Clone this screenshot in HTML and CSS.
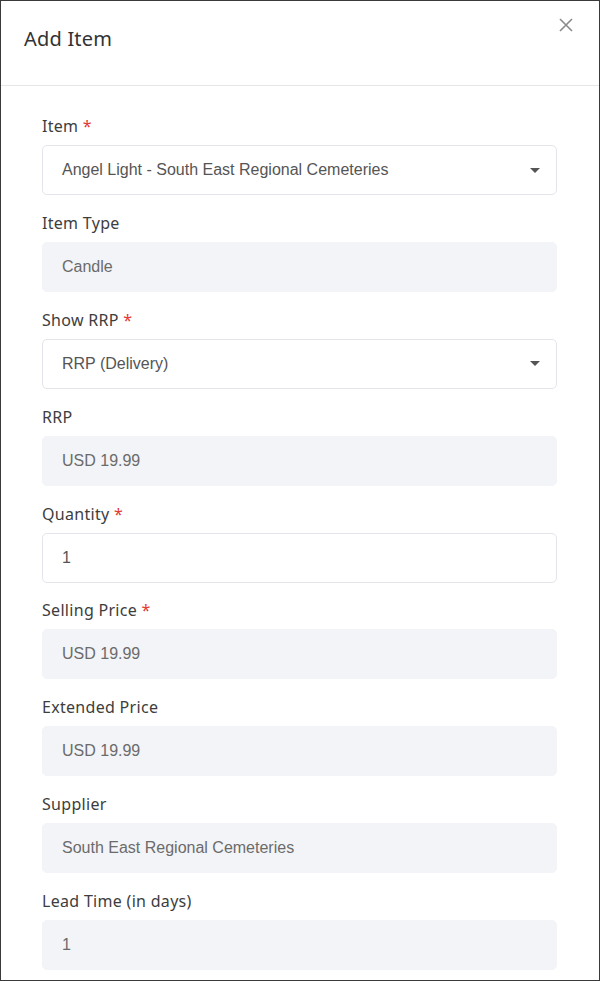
FILE: index.html
```html
<!DOCTYPE html>
<html>
<head>
<meta charset="utf-8">
<link rel="stylesheet" href="styles.css">
</head>
<body>
<div class="modal">
  <div class="header">
    <div class="title">Add Item</div>
    <button class="close" aria-label="Close">
      <svg width="14" height="14" viewBox="0 0 14 14"><path d="M1 1L13 13M13 1L1 13" stroke="#8a8a8a" stroke-width="1.6" fill="none"/></svg>
    </button>
  </div>
  <div class="body">
    <div class="field">
      <div class="label">Item <span class="req">*</span></div>
      <div class="input select"><span>Angel Light - South East Regional Cemeteries</span><span class="caret"></span></div>
    </div>
    <div class="field">
      <div class="label">Item Type</div>
      <div class="input ro">Candle</div>
    </div>
    <div class="field">
      <div class="label">Show RRP <span class="req">*</span></div>
      <div class="input select"><span>RRP (Delivery)</span><span class="caret"></span></div>
    </div>
    <div class="field">
      <div class="label">RRP</div>
      <div class="input ro">USD 19.99</div>
    </div>
    <div class="field">
      <div class="label">Quantity <span class="req">*</span></div>
      <div class="input">1</div>
    </div>
    <div class="field">
      <div class="label">Selling Price <span class="req">*</span></div>
      <div class="input ro">USD 19.99</div>
    </div>
    <div class="field">
      <div class="label">Extended Price</div>
      <div class="input ro">USD 19.99</div>
    </div>
    <div class="field">
      <div class="label">Supplier</div>
      <div class="input ro">South East Regional Cemeteries</div>
    </div>
    <div class="field">
      <div class="label">Lead Time (in days)</div>
      <div class="input ro">1</div>
    </div>
  </div>
</div>
</body>
</html>
```
FILE: styles.css
```css
html, body {
  margin: 0;
  padding: 0;
  background: #fff;
}
.modal {
  width: 600px;
  height: 981px;
  box-sizing: border-box;
  border: 1px solid #3a3a3a;
  overflow: hidden;
  background: #fff;
}
.header {
  height: 84px;
  border-bottom: 1px solid #e6e6e6;
  display: flex;
  justify-content: space-between;
  align-items: flex-start;
  padding: 0 26px 0 23px;
}
.title {
  font-family: "Noto Sans", sans-serif;
  font-size: 20px;
  color: #333;
  margin-top: 24px;
  letter-spacing: 0.2px;
}
.close {
  border: none;
  background: none;
  padding: 0;
  margin-top: 17px;
  width: 14px;
  height: 14px;
  display: flex;
  cursor: pointer;
}
.body {
  padding: 30px 42px 0 41px;
  display: flex;
  flex-direction: column;
  gap: 17.875px;
}
.field {
  display: flex;
  flex-direction: column;
  gap: 9px;
}
.label {
  font-family: "Noto Sans", sans-serif;
  font-size: 16px;
  line-height: 20px;
  letter-spacing: 0.3px;
  color: #3d3d3d;
}
.req {
  color: #e53935;
}
.input {
  height: 50px;
  box-sizing: border-box;
  border: 1px solid #e4e5ea;
  border-radius: 5px;
  padding: 0 20px 0 19px;
  display: flex;
  align-items: center;
  font-family: "Liberation Sans", Arial, sans-serif;
  font-size: 16px;
  color: #555;
  background: #fff;
}
.input.ro {
  background: #f3f4f7;
  border-color: #f3f4f7;
  color: #6b6b6b;
}
.select {
  justify-content: space-between;
}
.caret {
  width: 0;
  height: 0;
  border-left: 5px solid transparent;
  border-right: 5px solid transparent;
  border-top: 5px solid #555;
  margin-right: -4px;
}
```
